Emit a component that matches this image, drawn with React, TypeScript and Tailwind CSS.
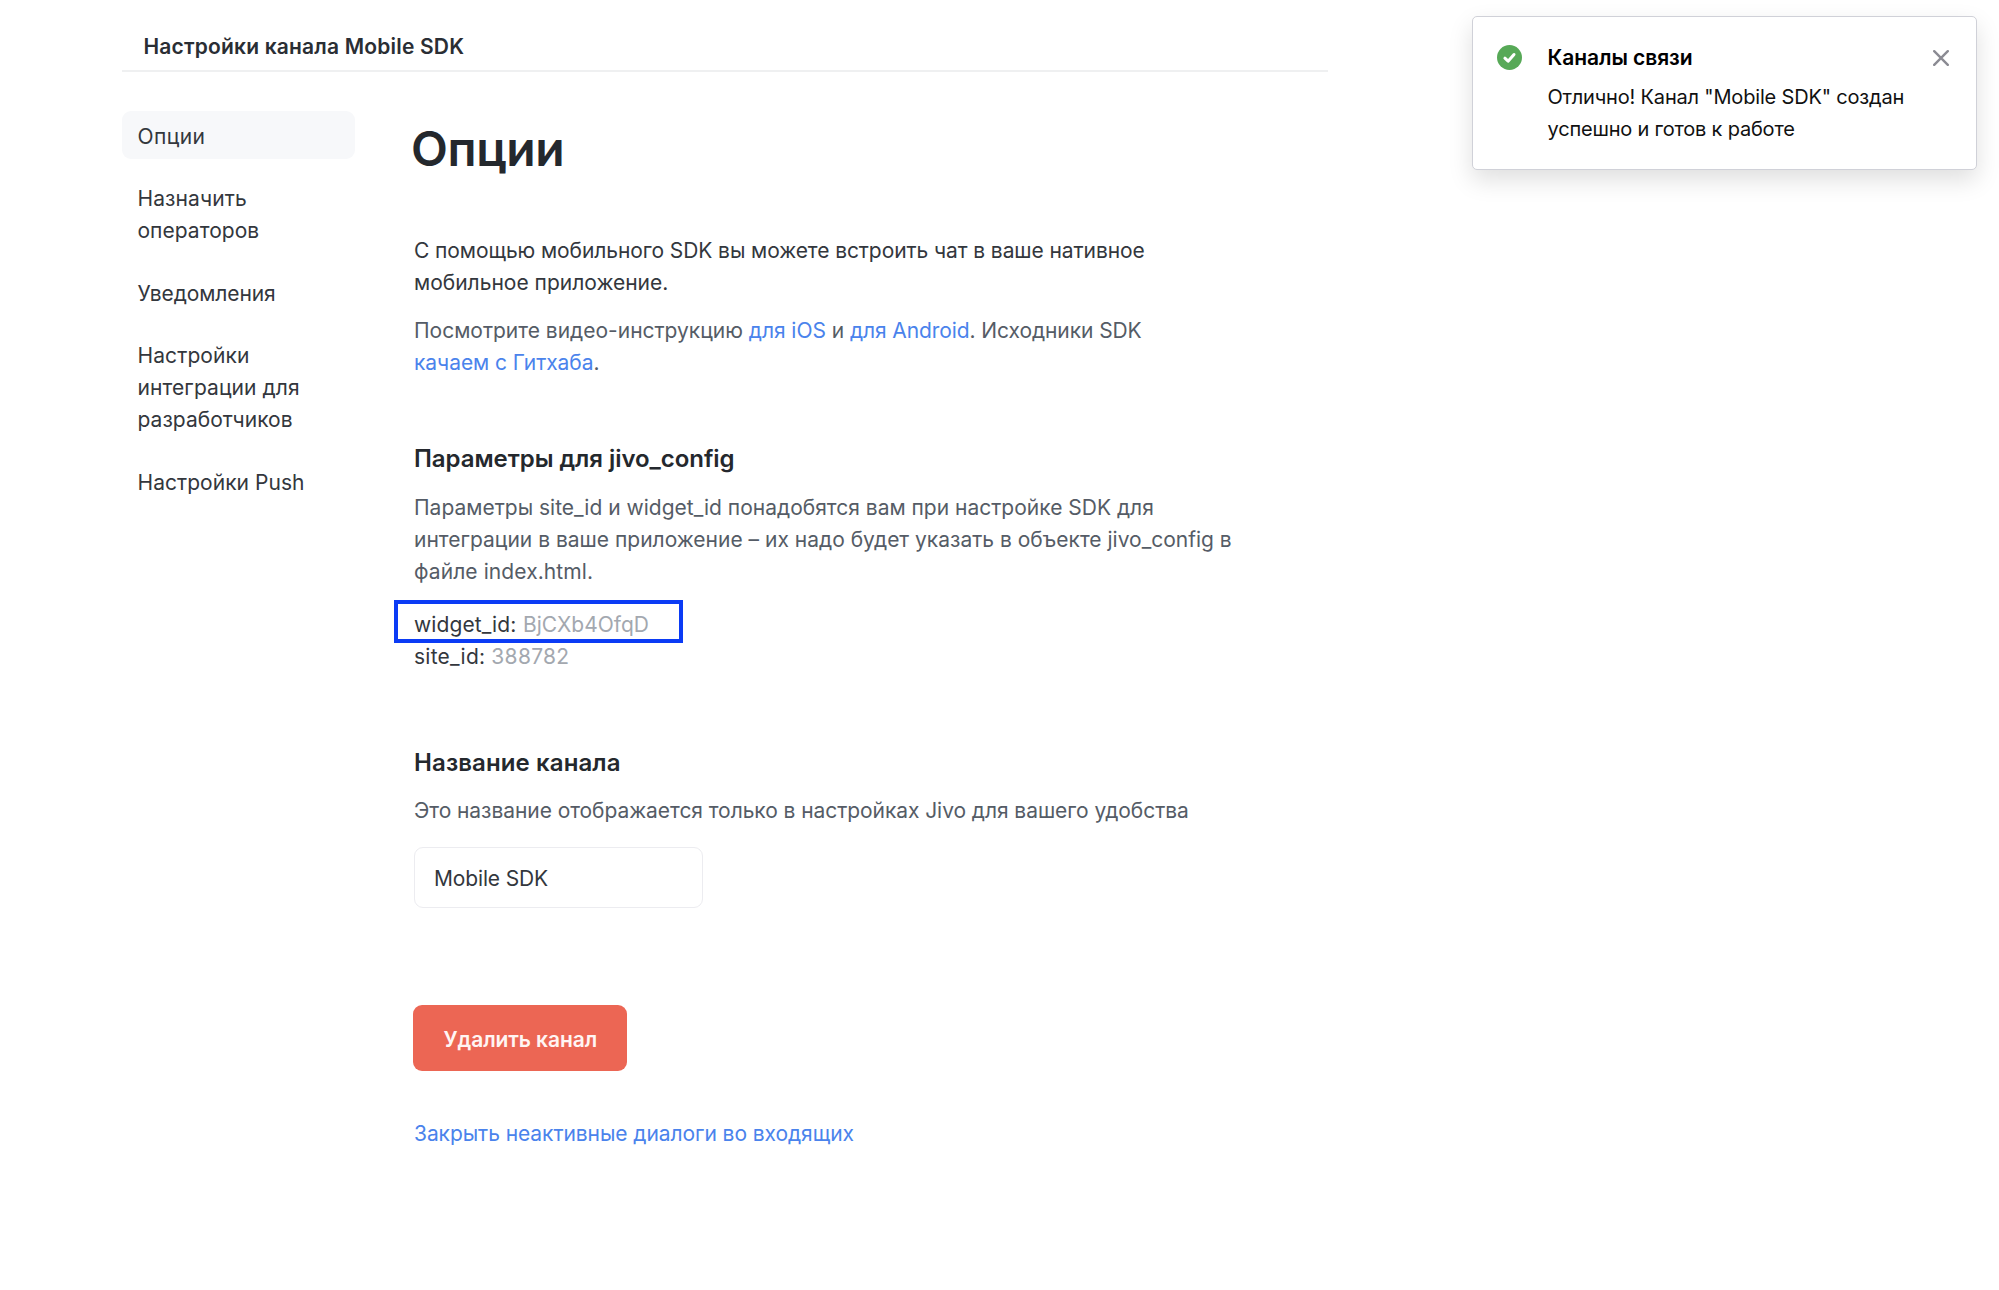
type NavEntry = { lines: { text: string; spacing: string }[]; active?: boolean };

const navEntries: NavEntry[] = [
  { lines: [{ text: "Опции", spacing: "tracking-[0.4px]" }], active: true },
  {
    lines: [
      { text: "Назначить", spacing: "tracking-[0.1px]" },
      { text: "операторов", spacing: "tracking-[0.03px]" },
    ],
  },
  { lines: [{ text: "Уведомления", spacing: "tracking-[-0.1px]" }] },
  {
    lines: [
      { text: "Настройки", spacing: "tracking-[0.1px]" },
      { text: "интеграции для", spacing: "tracking-[0.08px]" },
      { text: "разработчиков", spacing: "tracking-[0.02px]" },
    ],
  },
  { lines: [{ text: "Настройки Push", spacing: "tracking-[0.04px]" }] },
];

function Sidebar() {
  return (
    <nav className="flex w-[233px] shrink-0 flex-col gap-[15.3px]">
      {navEntries.map((entry) => (
        <a
          key={entry.lines[0].text}
          className={
            entry.active
              ? "block rounded-[9px] bg-[#f7f8fa] pt-[9.4px] pr-4 pb-[5.9px] pl-[15.5px]"
              : "block pt-[9.4px] pr-4 pb-[5.9px] pl-[15.5px]"
          }
        >
          {entry.lines.map((line) => (
            <span key={line.text} className={`block whitespace-nowrap ${line.spacing}`}>
              {line.text}
            </span>
          ))}
        </a>
      ))}
    </nav>
  );
}

function Toast() {
  return (
    <aside className="absolute top-[16px] left-[1472px] flex h-[154px] w-[505px] rounded-[5px] border-[1.5px] border-[#d0d1d8] bg-white pt-[25px] pl-[23.5px] text-black shadow-[0_10px_24px_rgba(0,0,0,0.13)]">
      <svg className="mt-[3px] h-[25px] w-[25px] shrink-0" viewBox="0 0 25 25" fill="none">
        <circle cx="12.5" cy="12.5" r="12.5" fill="#57a957" />
        <path
          d="M7.9 13.2L11.1 16.2L17 9.5"
          stroke="#fff"
          strokeWidth="3"
          strokeLinecap="round"
          strokeLinejoin="round"
        />
      </svg>
      <div className="ml-[26px] whitespace-nowrap">
        <h2 className="font-semibold tracking-[-0.06px]">Каналы связи</h2>
        <p className="mt-[7px] text-[20px] leading-[32px] text-[#111]">
          <span className="block tracking-[-0.18px]">Отлично! Канал "Mobile SDK" создан</span>
          <span className="block tracking-[-0.2px]">успешно и готов к работе</span>
        </p>
      </div>
      <svg
        className="absolute top-[33px] right-[27px] h-[16px] w-[16px]"
        viewBox="0 0 16 16"
        fill="none"
        stroke="#8b8b93"
        strokeWidth="2.4"
        strokeLinecap="round"
      >
        <path d="M1.2 1.2L14.8 14.8M14.8 1.2L1.2 14.8" />
      </svg>
    </aside>
  );
}

export default function App() {
  return (
    <div className="relative h-[1290px] w-[1999px] overflow-hidden bg-white font-['Inter',sans-serif] text-[21px] leading-[32px] text-[#33373d]">
      <div className="ml-[122px] w-[1206px]">
        <header className="h-[72px] border-b-2 border-[#eff0f1] pt-[31px] pl-[21.5px]">
          <h1 className="font-semibold tracking-[0.18px] whitespace-nowrap text-[#2a2e34]">
            Настройки канала Mobile SDK
          </h1>
        </header>

        <div className="mt-[39.3px] flex">
          <Sidebar />

          <main className="ml-[59px] w-[860px] whitespace-nowrap">
            <h2 className="mt-[10px] ml-[-3px] text-[48px] leading-[56px] font-semibold tracking-[-0.4px] text-[#24282d]">
              Опции
            </h2>

            <p className="mt-[58px]">
              <span className="block tracking-[-0.085px]">
                С помощью мобильного SDK вы можете встроить чат в ваше нативное
              </span>
              <span className="block">мобильное приложение.</span>
            </p>

            <p className="mt-[16px] text-[#555c66]">
              <span className="block tracking-[-0.05px]">
                <span className="tracking-[-0.01px]">Посмотрите видео-инструкцию </span>
                <a className="text-[#4a83ec]">для iOS</a> и{" "}
                <a className="tracking-[-0.1px] text-[#4a83ec]">для Android</a>
                <span className="tracking-[-0.08px]">. Исходники SDK</span>
              </span>
              <span className="block tracking-[-0.05px]">
                <a className="text-[#4a83ec]">качаем с Гитхаба</a>.
              </span>
            </p>

            <h3 className="mt-[64px] text-[24px] font-semibold tracking-[-0.05px] text-[#24282d]">
              Параметры для jivo_config
            </h3>
            <p className="mt-[16.5px] text-[#555c66]">
              <span className="block">
                Параметры site_id и widget_id понадобятся вам при настройке SDK для
              </span>
              <span className="block">
                интеграции в ваше приложение – их надо будет указать в объекте jivo_config в
              </span>
              <span className="block tracking-[0.09px]">файле index.html.</span>
            </p>

            <dl className="mt-[21.5px]">
              <div className="relative flex gap-[6.5px]">
                <dt className="tracking-[0.1px]">widget_id:</dt>
                <dd className="text-[#a3a8af]">BjCXb4OfqD</dd>
                <span className="absolute top-[-9px] left-[-20.5px] h-[43px] w-[289.5px] border-4 border-[#0b3bf5]" />
              </div>
              <div className="flex gap-[6px]">
                <dt className="tracking-[0.25px]">site_id:</dt>
                <dd className="tracking-[0.28px] text-[#a3a8af]">388782</dd>
              </div>
            </dl>

            <h3 className="mt-[74px] text-[24px] font-semibold tracking-[0.1px] text-[#24282d]">
              Название канала
            </h3>
            <p className="mt-[16px] tracking-[-0.065px] text-[#555c66]">
              Это название отображается только в настройках Jivo для вашего удобства
            </p>

            <div className="mt-[19.5px] flex h-[61px] w-[289px] items-center rounded-[9px] border-[1.5px] border-[#ececf0] pt-[4px] pl-[19px] tracking-[-0.15px]">
              Mobile SDK
            </div>

            <button className="mt-[97.5px] ml-[-0.7px] flex h-[66px] w-[214px] items-center justify-center rounded-[9px] bg-[#ec6654] pt-[3px] font-semibold tracking-[-0.1px] text-[#fff5f3]">
              Удалить канал
            </button>

            <a className="mt-[47px] block tracking-[-0.072px] text-[#4a83ec]">
              Закрыть неактивные диалоги во входящих
            </a>
          </main>
        </div>
      </div>

      <Toast />
    </div>
  );
}
